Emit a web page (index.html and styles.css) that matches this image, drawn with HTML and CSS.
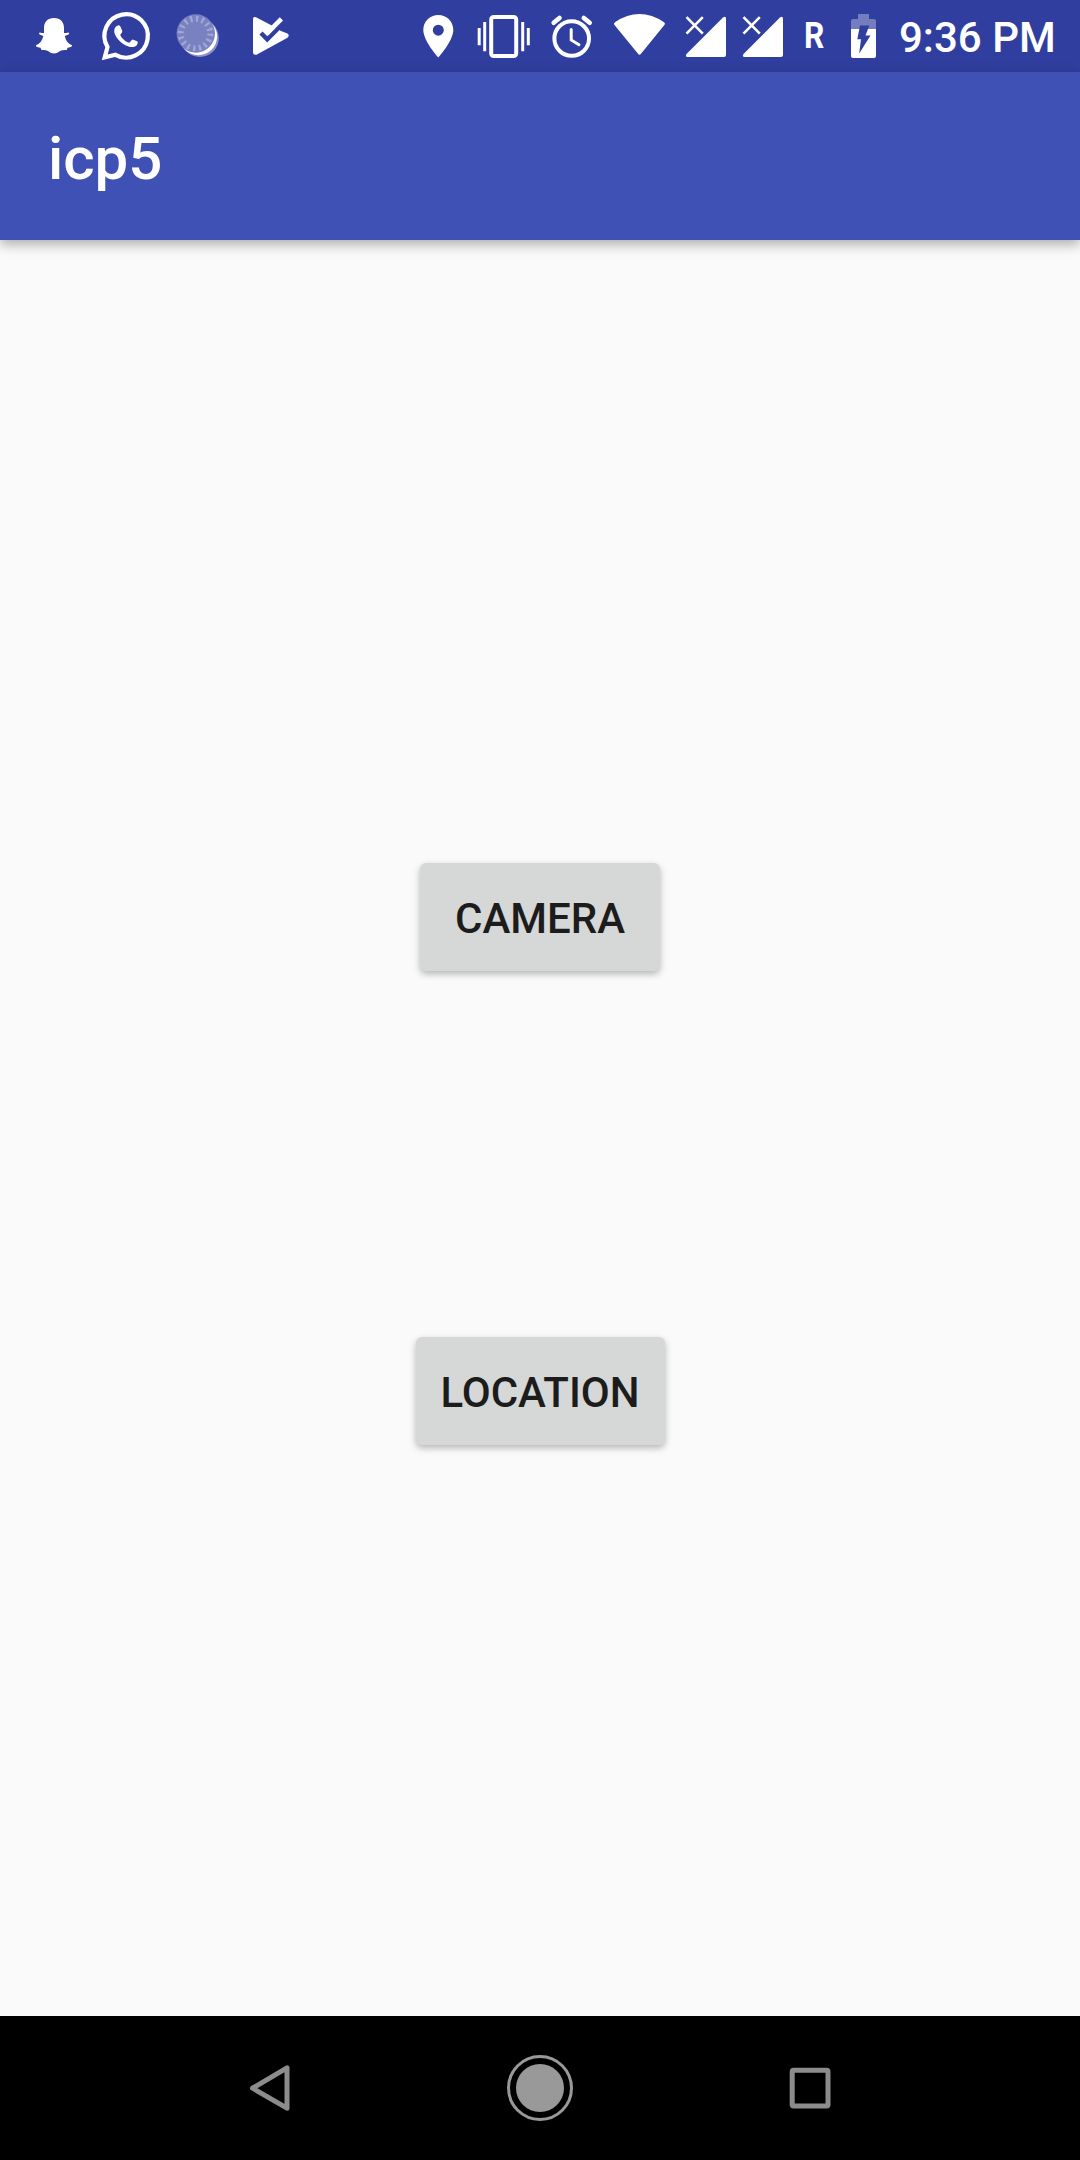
FILE: index.html
```html
<!DOCTYPE html>
<html lang="en">
<head>
<meta charset="utf-8">
<title>icp5</title>
<link rel="stylesheet" href="styles.css">
</head>
<body>
<div class="screen">
  <header class="status">
    <div class="notifications">
      <svg width="72" height="72" viewBox="18 0 72 72" fill="#fff">
        <path d="M54 18C60.5 18 64 22 64 28V33Q66 33 68.500 32.500Q70 33.500 68.500 34.500L64.800 36C65.500 40.500 68 43.500 72 45.200Q72.500 46.800 70 47.200L67.600 47.800L66.800 50Q62.500 49.500 60 51Q57 53.500 54 53.600Q51 53.500 48 51Q45.500 49.500 41.500 50L40.500 47.800L38 47.200Q35.300 46.500 36 45.200C40 43.500 42.500 40.500 43.300 36L39.600 34.500Q38.500 33.500 39.600 32.500Q42 33 44 33V28C44 22 47.500 18 54 18Z"/>
      </svg>
      <svg width="72" height="72" viewBox="90 0 72 72">
        <path d="M104.700 57.400L107.500 47A21.700 21.700 0 1 1 115.500 54.800Z" fill="none" stroke="#fff" stroke-width="4.200"/>
        <path d="M118 25.400C119.500 25 120.200 26 120.700 27.300L122.300 31C122.700 32 121 33.800 120.200 34.700C121 37.500 125 41.500 129.200 42.700C130.300 42 131.500 39.600 132.700 39.400L137 41.300C138.500 42 137.500 44.500 136.500 45.500C134.500 47.200 131.500 47.500 128.500 46.500C121.500 44 116.500 38.500 114.800 34C113.500 30 114.800 26 118 25.400Z" fill="#fff"/>
      </svg>
      <svg width="72" height="72" viewBox="162 0 72 72">
        <circle cx="199.800" cy="38" r="19" fill="#8b92cb"/>
        <circle cx="198.300" cy="36.500" r="18.800" fill="#fff"/>
        <circle cx="195.800" cy="33.500" r="19.200" fill="#7a81c0"/>
        <circle cx="195.500" cy="33.500" r="14.800" fill="none" stroke="#a0a6d5" stroke-width="6" stroke-dasharray="2.300 3.512"/>
      </svg>
      <svg width="72" height="72" viewBox="234 0 72 72">
        <path d="M253 19Q253 16.300 256 17.300L271.800 25.500L281 31L287.500 33.500Q290 35.500 287.500 37.800L256.500 54.700Q253 55.500 253 52.500Z" fill="#fff"/>
        <path d="M272 25.600L274 23L290 20V34.500L280.500 29.200L276 29Z" fill="#303f9f"/>
        <path d="M261 33L267.200 39.300L281 25.500" fill="none" stroke="#303f9f" stroke-width="4.400"/>
        <path d="M266.500 33.800L281.400 18.900" fill="none" stroke="#fff" stroke-width="4.600"/>
      </svg>
    </div>
    <div class="system">
      <svg width="46" height="72" viewBox="415 0 46 72"><path fill="#fff" fill-rule="evenodd" d="M438.300 15C446.700 15 453.300 21.500 453.300 30C453.300 41 438.300 57.500 438.300 57.500S423.300 41 423.300 30C423.300 21.500 430 15 438.300 15ZM438.300 24.700A5.500 5.500 0 1 0 438.300 35.700A5.500 5.500 0 1 0 438.300 24.700Z"/></svg>
      <svg width="84" height="72" viewBox="461 0 84 72" fill="none" stroke="#fff">
        <path stroke-width="3" d="M479.200 28V45.300M484.700 22V51.300M522.700 22V51.300M528.300 28V45.300"/>
        <rect x="491.200" y="17" width="25" height="39" rx="2.500" stroke-width="4"/>
      </svg>
      <svg width="62" height="72" viewBox="545 0 62 72" fill="none" stroke="#fff">
        <circle cx="571.700" cy="38.500" r="17.300" stroke-width="4"/>
        <path stroke-width="3" stroke-linecap="round" d="M571.200 29.500V40L579 44.800"/>
        <path stroke-width="4.600" stroke-linecap="round" d="M553.700 22.800L559.500 18M583.800 18L589.700 22.800"/>
      </svg>
      <svg width="70" height="72" viewBox="607 0 70 72"><path fill="#fff" d="M614.300 24.800Q613.300 23.300 615 22.200Q639.500 6 664 22.200Q665.700 23.300 664.600 24.800L641 53.800Q639.500 55.800 638 53.800Z"/></svg>
      <svg width="57" height="72" viewBox="677 0 57 72"><path fill="#fff" d="M723 17.500Q726 15.500 726 19V55Q726 57 724 57H687.500Q685 57 686.500 54Z"/><path d="M686.500 17.200L702.800 33.600M702.800 17.200L686.500 33.600" stroke="#fff" stroke-width="2.600"/></svg>
      <svg width="57" height="72" viewBox="677 0 57 72"><path fill="#fff" d="M723 17.500Q726 15.500 726 19V55Q726 57 724 57H687.500Q685 57 686.500 54Z"/><path d="M686.500 17.200L702.800 33.600M702.800 17.200L686.500 33.600" stroke="#fff" stroke-width="2.600"/></svg>
      <span class="roaming">R</span>
      <svg width="46" height="72" viewBox="840 0 46 72">
        <path fill="#747dbd" d="M858 14H869V19H874Q876 19 876 21V29H851V21Q851 19 853 19H858Z"/>
        <path fill="#fff" d="M851 29H876V56Q876 58 874 58H853Q851 58 851 56Z"/>
        <path fill="#303f9f" d="M860 25.500H869.300L865.500 35.500H870.500L859.200 53.500L861 39.300H857.300Z"/>
      </svg>
      <span class="clock">9:36 PM</span>
    </div>
  </header>
  <div class="appbar"><h1 class="title">icp5</h1></div>
  <main class="content">
    <button class="action camera">CAMERA</button>
    <button class="action location">LOCATION</button>
  </main>
  <nav class="navbar">
    <svg width="270" height="144" viewBox="135 2016 270 144"><path d="M287 2067.800V2108.200L252.500 2088.200Z" fill="none" stroke="#8c8c8c" stroke-width="5" stroke-linejoin="round"/></svg>
    <svg width="270" height="144" viewBox="405 2016 270 144"><circle cx="540" cy="2088" r="31.500" fill="none" stroke="#999" stroke-width="3"/><circle cx="540" cy="2088" r="24" fill="#999"/></svg>
    <svg width="270" height="144" viewBox="675 2016 270 144"><rect x="792.200" y="2070.200" width="35.800" height="35.800" rx="1.500" fill="none" stroke="#8c8c8c" stroke-width="5"/></svg>
  </nav>
</div>
</body>
</html>
```
FILE: styles.css
```css
* { box-sizing: border-box; }
body { margin: 0; font-family: Roboto, sans-serif; font-weight: 500; }
svg { display: block; flex: none; }
.screen { width: 1080px; height: 2160px; display: flex; flex-direction: column; background: #fafafa; }
.status { height: 72px; background: #303f9f; color: #fff; display: flex; justify-content: space-between; }
.notifications { display: flex; padding-left: 18px; }
.system { display: flex; width: 665px; }
.roaming { width: 49px; padding-left: 13px; font-size: 36px; line-height: 73px; font-weight: 700; transform-origin: 13px 50%; transform: scaleX(.88); }
.clock { padding-left: 13px; font-size: 42px; line-height: 76px; white-space: nowrap; }
.appbar { height: 168px; padding: 6px 48px 0; background: #3f51b5; display: flex; align-items: center; box-shadow: 0 4px 12px rgba(0,0,0,.33); z-index: 1; }
.title { margin: 0; color: #fff; font-size: 60px; line-height: 70px; font-weight: 500; }
.content { flex: 1; display: flex; flex-direction: column; align-items: center; padding-top: 623px; gap: 366px; }
.action { height: 108px; padding: 4px 0 0; border: 0; border-radius: 6px; background: #d6d7d7; color: #1c1c1c; font: 500 42px/104px Roboto, sans-serif; box-shadow: 0 3px 7px rgba(0,0,0,.28); }
.camera { width: 240px; }
.location { width: 249px; }
.navbar { height: 144px; background: #000; display: flex; justify-content: center; }
```
